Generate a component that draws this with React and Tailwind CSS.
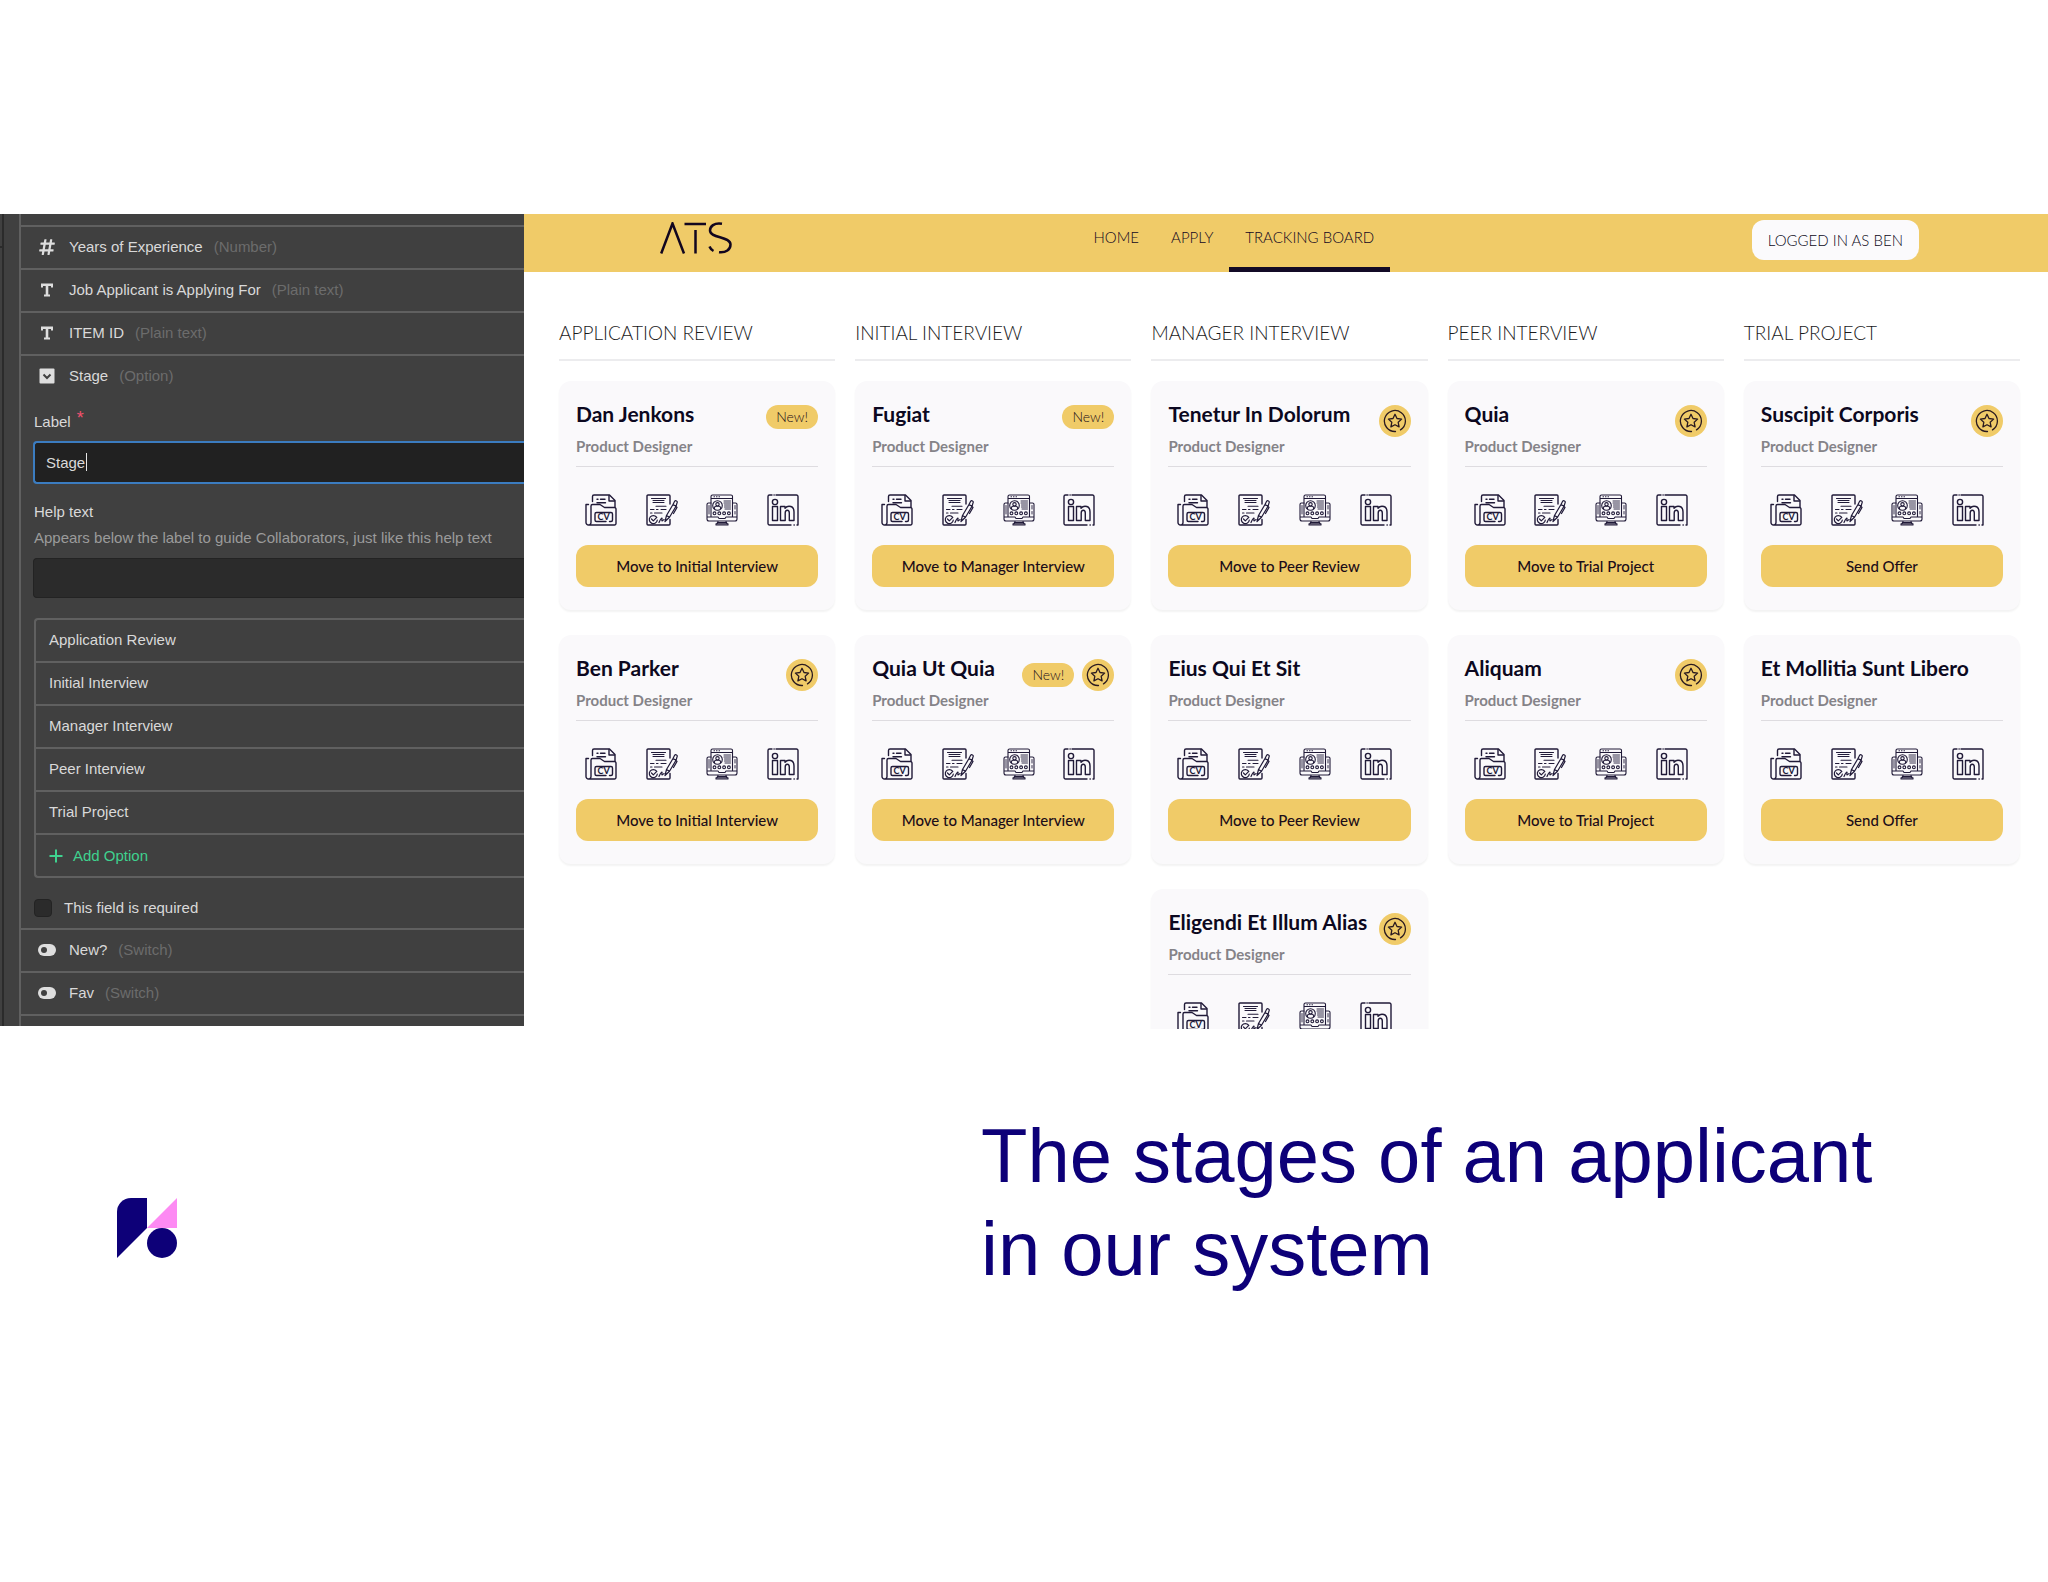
import { FaHashtag } from "react-icons/fa";

const navLinks = ["HOME", "APPLY", "TRACKING BOARD"];

const stageOptions = [
  "Application Review",
  "Initial Interview",
  "Manager Interview",
  "Peer Interview",
  "Trial Project",
];

const columns = [
  {
    title: "APPLICATION REVIEW",
    action: "Move to Initial Interview",
    applicants: [
      { name: "Dan Jenkons", isNew: true },
      { name: "Ben Parker", fav: true },
    ],
  },
  {
    title: "INITIAL INTERVIEW",
    action: "Move to Manager Interview",
    applicants: [
      { name: "Fugiat", isNew: true },
      { name: "Quia Ut Quia", isNew: true, fav: true },
    ],
  },
  {
    title: "MANAGER INTERVIEW",
    action: "Move to Peer Review",
    applicants: [
      { name: "Tenetur In Dolorum", fav: true },
      { name: "Eius Qui Et Sit" },
      { name: "Eligendi Et Illum Alias", fav: true },
    ],
  },
  {
    title: "PEER INTERVIEW",
    action: "Move to Trial Project",
    applicants: [
      { name: "Quia", fav: true },
      { name: "Aliquam", fav: true },
    ],
  },
  {
    title: "TRIAL PROJECT",
    action: "Send Offer",
    applicants: [
      { name: "Suscipit Corporis", fav: true },
      { name: "Et Mollitia Sunt Libero" },
    ],
  },
];

/* ================= ICONS ================= */

const TextIcon = () => (
  <svg viewBox="0 0 16 16" className="w-4 h-4" fill="currentColor">
    <path d="M2 1.500h12v4h-2V4H9.300v8.500H11v2H5v-2h1.700V4H4v1.500H2z" />
  </svg>
);

const OptionIcon = () => (
  <svg viewBox="0 0 16 16" className="w-4 h-4">
    <rect x="0.500" y="0.500" width="15" height="15" rx="1" fill="currentColor" />
    <path d="M4.500 6.500L8 10l3.500-3.500" fill="none" stroke="#404040" strokeWidth="2" />
  </svg>
);

const SwitchIcon = () => (
  <svg viewBox="0 0 18 14" className="w-[18px] h-[14px]">
    <rect x="0" y="1" width="18" height="12" rx="6" fill="currentColor" />
    <circle cx="6" cy="7" r="3" fill="#404040" />
  </svg>
);

const iconProps = {
  viewBox: "0 0 32 32",
  className: "w-8 h-8",
  fill: "none",
  stroke: "currentColor",
  strokeWidth: 1.4,
  strokeLinecap: "round",
  strokeLinejoin: "round",
};

const CvIcon = () => (
  <svg {...iconProps}>
    <path d="M7.500 7.500V2.500a1.500 1.500 0 0 1 1.500-1.500H24.500L30 6.500V13" />
    <path d="M24 1.500V7h5.500" />
    <path d="M12 5.300h1M15.500 5.300H20M12 8.800h8.500" />
    <path d="M3.500 10.500H1V28.500A2.500 2.500 0 0 0 3.500 31H29.500a1.500 1.500 0 0 0 1.500-1.500V15a1.500 1.500 0 0 0-1.500-1.500H19.500L15 10.500H7.500a1.500 1.500 0 0 0-1.500 1.500V28.500A2.500 2.500 0 0 1 3.500 31" />
    <path d="M21 27.500H11.500a1.500 1.500 0 0 1-1.500-1.500V20a1.500 1.500 0 0 1 1.500-1.500H26a1.500 1.500 0 0 1 1.500 1.500V26a1.500 1.500 0 0 1-1.500 1.500H24.500" />
    <text
      x="18.700"
      y="26.200"
      fontSize="9"
      fontWeight="bold"
      textAnchor="middle"
      fill="currentColor"
      stroke="none"
    >
      CV
    </text>
  </svg>
);

const ResumeIcon = () => (
  <svg {...iconProps}>
    <path d="M24 10V2a1 1 0 0 0-1-1H2a1 1 0 0 0-1 1V30a1 1 0 0 0 1 1H23a1 1 0 0 0 1-1V25.500" />
    <path
      d="M5.500 4.500H19.500M7 6.500H18M7 8.500H18M10 12.200H20M4.500 15.500H8M10.500 15.500H12M15 15.500H20M4.500 19H6M8.500 19H16"
      strokeWidth="1.100"
    />
    <path d="M10.500 23.200A4 4 0 1 0 11.300 26" strokeWidth="1.200" />
    <path d="M5.500 25l1.800 1.800L10.800 23.300" strokeWidth="1.200" />
    <path d="M13 28.500c1-2 2-4.500 2.800-4.500s-.5 3 .3 3 1.200-1.500 2-1.500" strokeWidth="1.200" />
    <path
      d="M19 27.500L20.500 21.500L27 10.500L30 12.300L23.500 23.300ZM20.500 21.500L23.500 23.300M27 10.500L28.500 7.500A1.300 1.300 0 0 1 31 9L30 12.300L31 13.500L27.500 19.500"
      strokeWidth="1.200"
    />
  </svg>
);

const PortfolioIcon = () => (
  <svg {...iconProps} strokeWidth="1.100">
    <path d="M5 22.500V2.500a1.500 1.500 0 0 1 1.500-1.500H25a1.500 1.500 0 0 1 1.500 1.500V22.500M5 4.500H26.500M8 2.800h.5M10.500 2.800h.5M13 2.800h.5" />
    <path d="M5 9H2.500a1.500 1.500 0 0 0-1.500 1.500V25a2 2 0 0 0 2 2H29a2 2 0 0 0 2-2V10.500A1.500 1.500 0 0 0 29.500 9H26.500M1 23H12l1 1.500h6l1-1.500H31" />
    <path d="M3 11.500V20M29 11.500V15M29 17.500V20" strokeWidth="0.900" />
    <circle cx="11.500" cy="11.500" r="4.800" />
    <circle cx="11.500" cy="10.300" r="1.700" />
    <path d="M8.500 14.800v-1a1.500 1.500 0 0 1 1.500-1.500h3a1.500 1.500 0 0 1 1.500 1.500v1" />
    <path d="M18 7H24.500M18 9H24.500M18.500 11H24.500M18.500 13H24.500M19 15H24.500" strokeWidth="0.900" />
    <circle cx="8.500" cy="19.300" r="1.400" />
    <circle cx="13.300" cy="19.300" r="1.400" />
    <circle cx="18.100" cy="19.300" r="1.400" />
    <circle cx="22.900" cy="19.300" r="1.400" />
    <path d="M12 27.500L11 29.500M20 27.500L21 29.500M12 28.500H20M10 29.800H22V31H10Z" />
  </svg>
);

const LinkedinIcon = () => (
  <svg {...iconProps}>
    <path d="M5 1H2.500A1.500 1.500 0 0 0 1 2.500V29.500A1.500 1.500 0 0 0 2.500 31H24M27 31h.3M30 31H31V2.500A1.500 1.500 0 0 0 29.500 1H9M7 1h.2" />
    <circle cx="8" cy="8" r="2.600" />
    <path d="M5.500 12.500H10.500V26.500H5.500Z" />
    <path d="M13.500 12.500H18V14.200C19.200 12.800 20.500 12.300 22 12.300c3.500 0 5 2.200 5 5.700V26.500H22.300V19c0-1.800-.6-2.800-2-2.800S18.200 17.200 18.200 19V26.500H13.500Z" />
  </svg>
);

const StarBadge = () => (
  <span className="flex items-center justify-center w-8 h-8 rounded-full bg-[#f0cb68] text-[#2a1a20]">
    <svg
      viewBox="0 0 24 24"
      className="w-6 h-6"
      fill="none"
      stroke="currentColor"
      strokeWidth="1.300"
      strokeLinecap="round"
      strokeLinejoin="round"
    >
      <path d="M12.500 22.500A10.500 10.500 0 1 1 17.500 20.900" />
      <path d="M12 5.300l2 4.200 4.600.6-3.400 3.200.9 4.600L12 15.700l-4.100 2.200.9-4.600-3.400-3.200 4.600-.6z" />
    </svg>
  </span>
);

const AtsLogo = () => (
  <svg
    viewBox="0 0 72 32"
    className="w-[72px] h-8"
    fill="none"
    stroke="#12061f"
    strokeWidth="2.500"
  >
    <path d="M1.200 31.500L12.500 1.500L24 31.500" />
    <path d="M24.500 2H46M35.500 8V31.500" />
    <path d="M62 1.800C54 .5 50 4.500 50 8.500c0 8 20.500 5.500 20.500 14 0 5-4.500 8.500-11.500 7.700" />
    <path d="M49.500 24.500C50.500 27 51.500 28 53.500 29" />
  </svg>
);

const BrandMark = () => (
  <svg viewBox="0 0 60 60" className="w-[60px] h-[60px]">
    <path d="M0 60V14A14 14 0 0 1 14 0H30V30Z" fill="#0d0078" />
    <path d="M60 0V30H30Z" fill="#fd8af3" />
    <circle cx="45" cy="45" r="15" fill="#0d0078" />
  </svg>
);

/* ================= FIELD EDITOR ================= */

const FieldRow = ({ icon, name, type }) => (
  <div className="flex items-center h-[43px] pl-[17px] pb-px border-t-2 border-[#606060]">
    <span className="flex justify-center w-[18px] mr-[13px] text-[#dedede]">{icon}</span>
    <span>{name}</span>
    <span className="ml-[11px] text-[#6c6c6c]">({type})</span>
  </div>
);

const FieldEditor = () => (
  <aside className="flex w-[524px] h-[812px] shrink-0 overflow-hidden bg-[#404040] text-[#d9d9d9] text-[15px] leading-5">
    <div className="w-[19px] shrink-0">
      <div className="w-1 h-full border-r-2 border-[#2b2b2b]">
        <div className="h-[34px] border-b-2 border-[#2b2b2b]" />
      </div>
    </div>
    <div className="flex-1 border-l-2 border-[#606060] pt-[11px]">
      <FieldRow icon={<FaHashtag size={18} />} name="Years of Experience" type="Number" />
      <FieldRow icon={<TextIcon />} name="Job Applicant is Applying For" type="Plain text" />
      <FieldRow icon={<TextIcon />} name="ITEM ID" type="Plain text" />
      <FieldRow icon={<OptionIcon />} name="Stage" type="Option" />

      <div className="pl-3">
        <label htmlFor="field-label" className="flex mt-[15px] ml-px">
          Label <span className="ml-[6px] -mt-1 text-lg leading-5 text-[#f0506e]">*</span>
        </label>
        <div className="relative mt-[9px]">
          <input
            id="field-label"
            type="text"
            defaultValue="Stage"
            className="block w-full h-[43px] rounded-l border-2 border-r-0 border-[#3b7cc0] bg-[#212121] pl-[11px] outline-none"
          />
          <span className="absolute left-[53px] top-3 w-px h-[18px] bg-[#e6e6e6]" />
        </div>

        <label htmlFor="field-help" className="block mt-[18px] ml-px">
          Help text
        </label>
        <p className="mt-[6px] ml-px whitespace-nowrap text-[#9b9b9b]">
          Appears below the label to guide Collaborators, just like this help text
        </p>
        <input
          id="field-help"
          type="text"
          className="mt-[10px] block w-full h-10 rounded-l border border-r-0 border-[#232323] bg-[#2b2b2b] pl-3 outline-none"
        />

        <ul className="mt-5 ml-px rounded-l border-2 border-r-0 border-[#606060]">
          {stageOptions.map((option) => (
            <li
              key={option}
              className="flex items-center h-[43px] pl-[13px] pb-px border-b-2 border-[#606060]"
            >
              {option}
            </li>
          ))}
          <li>
            <button className="flex items-center h-[41px] pl-[13px] text-[#3fd28f]">
              <svg viewBox="0 0 14 14" className="w-[14px] h-[14px] mr-[10px]">
                <path d="M7 0.500v13M0.500 7h13" stroke="currentColor" strokeWidth="2" />
              </svg>
              Add Option
            </button>
          </li>
        </ul>

        <label className="flex items-center mt-5 mb-[10px] ml-px">
          <input
            type="checkbox"
            className="appearance-none w-[18px] h-[18px] mr-3 rounded-sm border border-[#232323] bg-[#2b2b2b]"
          />
          This field is required
        </label>
      </div>

      <FieldRow icon={<SwitchIcon />} name="New?" type="Switch" />
      <FieldRow icon={<SwitchIcon />} name="Fav" type="Switch" />
      <div className="h-5 border-t-2 border-[#606060]" />
    </div>
  </aside>
);

/* ================= TRACKING BOARD ================= */

const ApplicantCard = ({ name, isNew, fav, action }) => (
  <article className="h-[229px] shrink-0 rounded-xl bg-[#faf9fb] px-[17px] pt-[19px] shadow-[0_2px_2px_rgba(0,0,0,0.05)]">
    <div className="flex justify-between">
      <div className="whitespace-nowrap">
        <h3 className="text-[21px] leading-7 font-bold text-[#0c0820]">{name}</h3>
        <p className="mt-2 text-[15px] leading-5 font-bold text-[#858388]">Product Designer</p>
      </div>
      <div className="flex items-center self-start gap-2 mt-[5px]">
        {isNew && (
          <span className="h-6 w-[52px] rounded-full bg-[#f0cb68] text-center text-sm leading-6 font-light text-[#1c0d18]">
            New!
          </span>
        )}
        {fav && <StarBadge />}
      </div>
    </div>
    <div className="mt-[10px] border-t border-[#dedce0]" />
    <div className="flex justify-between mt-[27px] pl-[9px] pr-[19px] text-[#201a38]">
      <a href="#cv" aria-label="CV"><CvIcon /></a>
      <a href="#resume" aria-label="Resume"><ResumeIcon /></a>
      <a href="#portfolio" aria-label="Portfolio"><PortfolioIcon /></a>
      <a href="#linkedin" aria-label="LinkedIn"><LinkedinIcon /></a>
    </div>
    <button className="mt-[19px] w-full h-[42px] rounded-xl bg-[#f0cb68] text-[15px] font-medium text-[#1c0d18]">
      {action}
    </button>
  </article>
);

const TrackingBoard = () => (
  <main className="flex-1 min-w-0 h-[815px] overflow-hidden font-['Lato',sans-serif]">
    <header className="flex justify-between h-[58px] pl-[136px] pr-[129px] bg-[#f0cb68]">
      <a href="#home" aria-label="ATS" className="mt-2">
        <AtsLogo />
      </a>
      <nav className="flex mr-4 text-[15px] font-light text-[#12061f]">
        {navLinks.map((link) => (
          <a
            key={link}
            href="#nav"
            className={`px-4 pt-[13px] leading-5 ${
              link === "TRACKING BOARD" ? "border-b-[5px] border-[#130a26]" : ""
            }`}
          >
            {link}
          </a>
        ))}
      </nav>
      <button className="mt-[6px] h-10 px-4 rounded-xl bg-[#fbfafc] text-[15px] font-light text-[#0c0820]">
        LOGGED IN AS BEN
      </button>
    </header>

    <div className="grid grid-cols-5 gap-x-5 pl-[35px] pr-7 pt-[47px]">
      {columns.map((column) => (
        <section key={column.title} className="min-w-0">
          <h2 className="h-[42px] border-b-2 border-[#ececee] text-[19px] leading-7 font-light text-[#1a1a1c]">
            {column.title}
          </h2>
          <div className="flex flex-col gap-[25px] mt-5">
            {column.applicants.map((applicant) => (
              <ApplicantCard key={applicant.name} {...applicant} action={column.action} />
            ))}
          </div>
        </section>
      ))}
    </div>
  </main>
);

const App = () => {
  return (
    <div className="min-h-screen bg-white pt-[214px] font-['Liberation_Sans',Arial,sans-serif]">
      <div className="flex items-start">
        <FieldEditor />
        <TrackingBoard />
      </div>

      <footer className="flex pl-[117px] mt-20">
        <div className="w-[864px] shrink-0 pt-[89px]">
          <BrandMark />
        </div>
        <h1 className="text-[76px] leading-[93px] text-[#0d0078]">
          The stages of an applicant
          <br />
          in our system
        </h1>
      </footer>
    </div>
  );
};

export default App;
